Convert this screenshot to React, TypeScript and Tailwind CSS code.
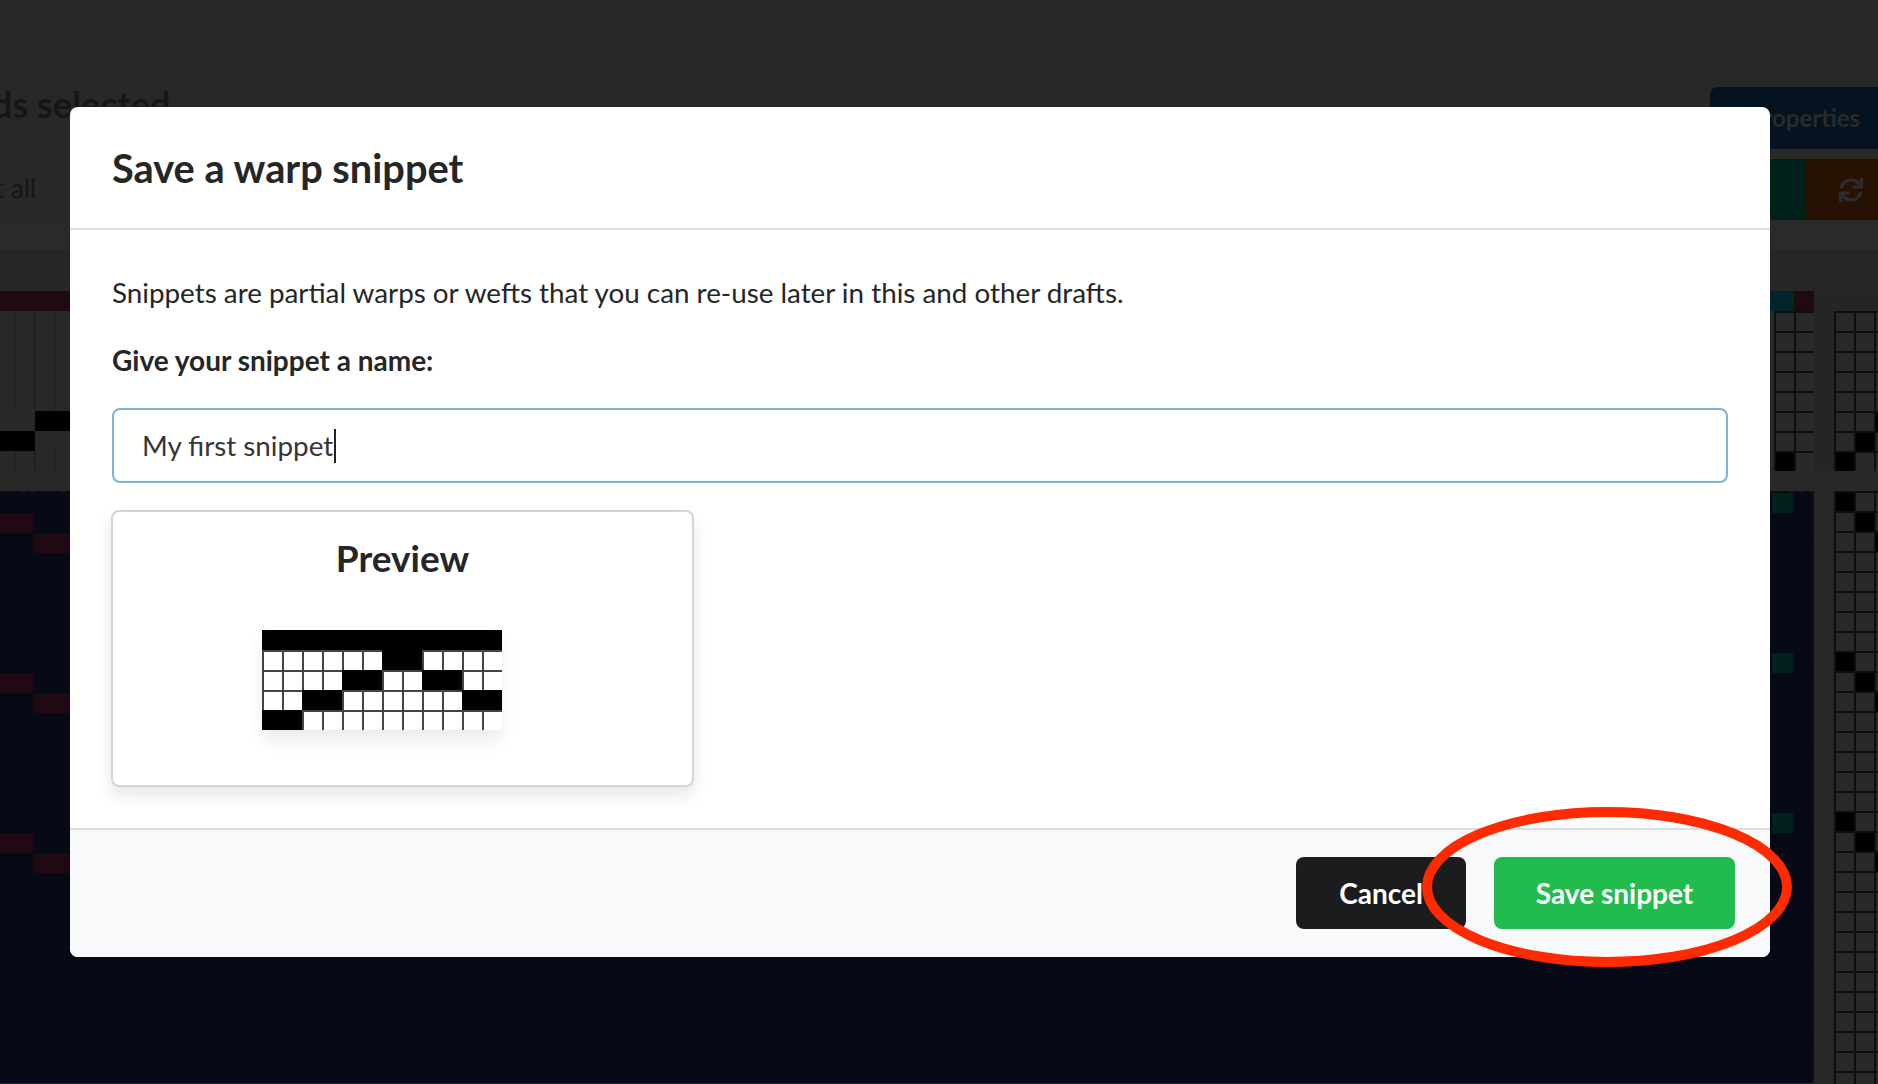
import React from "react";
import { FaSync } from "react-icons/fa";

const PREVIEW: number[][] = [
  [0, 1, 2, 3, 4, 5, 6, 7, 8, 9, 10, 11],
  [6, 7],
  [4, 5, 8, 9],
  [2, 3, 10, 11],
  [0, 1],
];

function range(n: number) {
  return Array.from({ length: n }, (_, i) => i);
}

function DraftGrid({ cols, rows, black }: { cols: number; rows: number; black: (c: number, r: number) => boolean }) {
  return (
    <div className="grid shrink-0 grid-cols-[repeat(auto-fill,20px)] auto-rows-[20px]" style={{ width: cols * 20 }}>
      {range(rows).map((r) =>
        range(cols).map((c) => (
          <div
            key={`${r}-${c}`}
            className={`border-l-2 border-t-2 border-[#0e0e0e] ${black(c, r) ? "bg-black" : "bg-[#292929]"}`}
          />
        ))
      )}
    </div>
  );
}

function Backdrop() {
  return (
    <div className="flex h-full w-full flex-col overflow-hidden bg-[#282828] font-['Lato',sans-serif] text-[#161616]">
      <div className="h-[57px] shrink-0 border-b border-[#2b2b2b]" />
      <div className="flex h-[98px] shrink-0 items-start justify-between">
        <div className="-ml-[8px] mt-[25px] text-[36px] font-bold leading-[44px]">ds selected</div>
        <div className="mt-[30px] flex h-[62px] w-[168px] items-center justify-end rounded-tl-lg bg-[#04131f] pr-[18px] text-[24px] font-bold text-[#2a2a2a]">
          Properties
        </div>
      </div>
      <div className="flex h-[65px] shrink-0 items-center justify-between border-y border-[#2c2c2c]">
        <div className="-ml-[5px] text-[26px] leading-none text-[#161616]">t all</div>
        <div className="mt-[3px] flex h-[62px] items-stretch self-start">
          <div className="w-[36px] bg-[#00201a]" />
          <div className="flex w-[72px] items-center bg-[#261103] pl-[33px] text-[#2c2c2c]">
            <FaSync size={24} />
          </div>
        </div>
      </div>
      <div className="h-[30px] shrink-0 border-b border-[#2c2c2c] bg-[#2a2a2a]" />
      <div className="h-[41px] shrink-0 bg-[#262626]" />

      <div className="flex shrink-0 bg-[#252525]">
        <div className="flex w-[1814px] shrink-0 flex-col">
          <div className="flex h-5 justify-between bg-[#1f0a10]">
            <div />
            <div className="flex">
              <div className="w-[24px] bg-[#00262a]" />
              <div className="w-[20px] bg-[#1f0a10]" />
            </div>
          </div>
          <div className="flex h-[160px] justify-between bg-[#282828]">
            <div className="-ml-[5px] flex flex-col">
              <div className="h-[100px] w-[80px] bg-[repeating-linear-gradient(90deg,#1d2524_0,#1d2524_2px,transparent_2px,transparent_20px)] [background-position:19px_0]" />
              <div className="flex h-5 w-[80px] pl-[40px]">
                <div className="w-[40px] bg-black" />
              </div>
              <div className="flex h-5 w-[80px]">
                <div className="w-[40px] bg-black" />
              </div>
              <div className="h-5 w-[80px] bg-[repeating-linear-gradient(90deg,#1d2524_0,#1d2524_2px,transparent_2px,transparent_20px)] [background-position:19px_0]" />
            </div>
            <DraftGrid cols={2} rows={8} black={(c, r) => c === 0 && r === 7} />
          </div>
        </div>
        <div className="ml-5 pt-5">
          <DraftGrid cols={3} rows={8} black={(c, r) => (c === 0 && r === 7) || (c === 1 && r === 6) || (c === 2 && r === 5)} />
        </div>
      </div>

      <div className="mt-5 flex shrink-0">
        <div className="flex h-[592px] w-[1814px] shrink-0 justify-between overflow-hidden border-r-2 border-t-2 border-dashed border-[#111111] bg-[#070a15] bg-[repeating-linear-gradient(180deg,#070a16_0,#070a16_18px,#060913_18px,#060913_20px)]">
          <div className="flex flex-col pt-[20px]">
            {range(3).map((i) => (
              <div key={i} className="h-[160px] w-[70px] shrink-0">
                <div className="h-5 w-[33px] bg-[#1f0a14]" />
                <div className="ml-[33px] h-5 w-[37px] bg-[#1f0a14]" />
              </div>
            ))}
          </div>
          <div className="flex flex-col">
            {range(3).map((i) => (
              <div key={i} className="h-[160px] w-[42px] shrink-0">
                <div className="ml-[2px] h-5 w-[21px] bg-[#02201c]" />
              </div>
            ))}
          </div>
        </div>
        <div className="ml-5 shrink-0">
          <DraftGrid cols={3} rows={30} black={(c, r) => r < 24 && r % 8 === c} />
        </div>
      </div>
    </div>
  );
}

function PreviewImage() {
  return (
    <div className="grid w-[240px] grid-cols-[repeat(12,20px)] auto-rows-[20px] shadow-[0_10px_16px_rgba(10,10,10,0.08)]">
      {PREVIEW.map((row, r) =>
        range(12).map((c) => (
          <div
            key={`${r}-${c}`}
            className={row.includes(c) ? "bg-black" : "border-l-2 border-t-2 border-[#444444] bg-white"}
          />
        ))
      )}
    </div>
  );
}

function Modal() {
  return (
    <div className="flex h-[850px] w-[1700px] flex-col overflow-hidden rounded-lg bg-white font-['Lato',sans-serif] text-[#262626]">
      <div className="flex h-[123px] shrink-0 items-center border-b-2 border-[#dedede] px-[42px]">
        <div className="text-[39.75px] font-bold leading-none">Save a warp snippet</div>
      </div>
      <div className="flex-1 px-[42px]">
        <p className="mt-[43px] text-[27.8px] leading-[40px]">
          Snippets are partial warps or wefts that you can re-use later in this and other drafts.
        </p>
        <div className="mt-[27px] text-[28px] font-bold leading-[40px]">Give your snippet a name:</div>
        <div className="mt-[28px] flex h-[75px] items-center rounded-lg border-2 border-[#7fb3d9] pl-[28px] text-[27.8px] text-[#363636]">
          <span>My first snippet</span>
          <span className="ml-[1px] h-[34px] w-[2px] bg-[#222222]" />
        </div>
        <div className="-ml-[1px] mt-[27px] flex h-[277px] w-[583px] flex-col rounded-lg border-2 border-[#d5d5d5] pt-[26px] shadow-[0_8px_16px_rgba(10,10,10,0.1)]">
          <div className="text-center text-[37px] font-bold leading-[40px]">Preview</div>
          <div className="ml-[149px] mt-[52px]">
            <PreviewImage />
          </div>
        </div>
      </div>
      <div className="flex h-[129px] shrink-0 items-start justify-end gap-[28px] border-t-2 border-[#dcdde0] bg-[#f8f9fb] pr-[35px] pt-[27px]">
        <button className="flex h-[72px] w-[170px] items-center justify-center rounded-lg bg-[#1b1c1e] text-[28px] font-bold text-white">
          Cancel
        </button>
        <button className="flex h-[72px] w-[241px] items-center justify-center rounded-lg bg-[#22bb4d] text-[28px] font-bold text-white">
          Save snippet
        </button>
      </div>
    </div>
  );
}

export default function App() {
  return (
    <div className="relative h-[1084px] w-[1878px] overflow-hidden">
      <Backdrop />
      <div className="absolute left-[70px] top-[107px]">
        <Modal />
      </div>
      <svg className="absolute left-[1422px] top-[807px]" width="370" height="160" viewBox="0 0 370 160" fill="none">
        <ellipse cx="185" cy="80" rx="180" ry="75" stroke="#ff2a00" strokeWidth="10" />
      </svg>
    </div>
  );
}
